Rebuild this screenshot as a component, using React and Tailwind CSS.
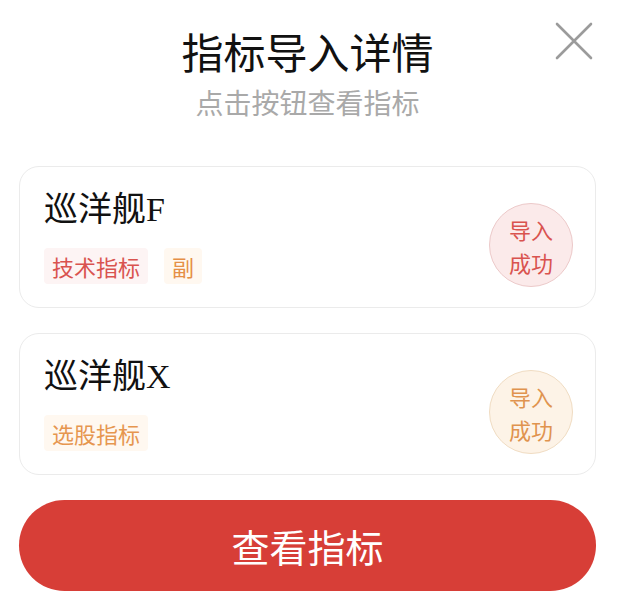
import React from "react";

const CJK = { fontFamily: '"Noto Sans CJK SC", "Noto Sans", sans-serif' };
const SERIF_CJK = { fontFamily: '"Liberation Serif", "Noto Sans CJK SC", serif' };

const items = [
    {
        name: "巡洋舰F",
        tags: [
            { label: "技术指标", className: "bg-[#fdf4f4] text-[#d9534f]" },
            { label: "副", className: "bg-[#fff8f0] text-[#e58f46]" },
        ],
        badge: "border-[#ecc9c9] bg-[#fbeaea] text-[#d9534f]",
    },
    {
        name: "巡洋舰X",
        tags: [{ label: "选股指标", className: "bg-[#fff8f0] text-[#e6964f]" }],
        badge: "border-[#f0dcc2] bg-[#fdf3e7] text-[#e0934f]",
    },
];

const CloseIcon = () => (
    <svg width="38" height="38" viewBox="0 0 38 38" fill="none">
        <path d="M2 2 L36 36 M36 2 L2 36" stroke="#9b9b9b" strokeWidth="2.6" strokeLinecap="round" />
    </svg>
);

const App = () => {
    return (
        <div className="min-h-[592px] w-full bg-white pl-[19px] pr-[33px] pt-[27px]" style={CJK}>
            <div className="relative flex flex-col items-center">
                <h1 className="text-[42px] font-normal leading-[48px] text-[#111111]">指标导入详情</h1>
                <p className="mt-[10px] text-[28px] leading-[34px] text-[#a9a9a9]">点击按钮查看指标</p>
                <button className="absolute right-[3px] top-[-5px]">
                    <CloseIcon />
                </button>
            </div>

            <div className="mt-[47px] flex flex-col gap-[25px]">
                {items.map((item) => (
                    <div
                        key={item.name}
                        className="flex h-[142px] items-start justify-between rounded-[20px] border border-[#ebebeb] bg-white pl-[24px] pr-[22px] pt-[23px]"
                    >
                        <div>
                            <div className="text-[34px] leading-[40px] text-[#111111]" style={SERIF_CJK}>
                                {item.name}
                            </div>
                            <div className="mt-[18px] flex gap-[16px]">
                                {item.tags.map((tag) => (
                                    <span
                                        key={tag.label}
                                        className={`flex h-[36px] items-center rounded-[4px] px-[8px] text-[22px] leading-none ${tag.className}`}
                                    >
                                        {tag.label}
                                    </span>
                                ))}
                            </div>
                        </div>
                        <div
                            className={`mt-[13px] flex h-[84px] w-[84px] flex-col items-center justify-center rounded-full border pt-[2px] text-[22px] leading-[33px] ${item.badge}`}
                        >
                            <span>导入</span>
                            <span>成功</span>
                        </div>
                    </div>
                ))}
            </div>

            <button className="mt-[25px] flex h-[91px] w-full items-center justify-center rounded-full bg-[#d73e37] text-[38px] leading-none text-white">
                查看指标
            </button>
        </div>
    );
};

export default App;
